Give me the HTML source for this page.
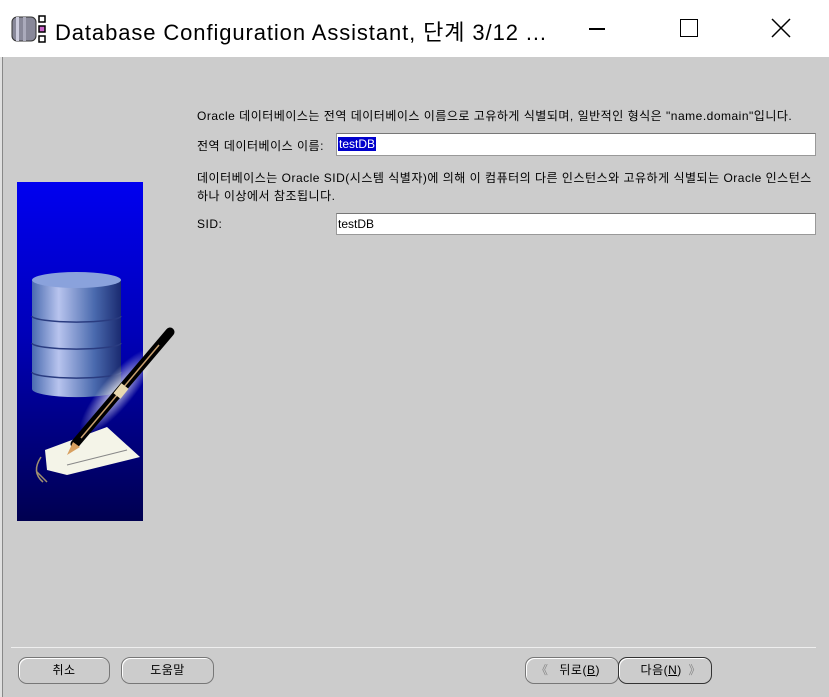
<!DOCTYPE html>
<html><head><meta charset="utf-8"><style>
*{margin:0;padding:0;box-sizing:border-box}
body{width:829px;height:697px;overflow:hidden;background:#cccccc;position:relative;font-family:"Liberation Sans","Noto Sans CJK KR",sans-serif}
.title{position:absolute;left:0;top:0;width:829px;height:57px;background:#fff}
.title .t{position:absolute;left:55px;top:15px;font-size:22px;color:#000;white-space:nowrap;letter-spacing:0.9px}
.lb{position:absolute;left:0;top:57px;width:3px;height:640px;background:#e0e0e0;border-right:1px solid #888}
.tx{position:absolute;font-size:12px;color:#000;white-space:nowrap;letter-spacing:0.5px}
.inp{position:absolute;left:336px;width:480px;background:#fff;border:1px solid #999;border-top-color:#777;font-size:12px;padding-left:1px}
.btn{position:absolute;top:657px;height:27px;border:1px solid #777;border-radius:9px;background:#ccc;font-size:12px;text-align:center;line-height:25px;box-shadow:inset 1px 1px 0 #fff;letter-spacing:0.5px}
</style></head><body>
<div class="title">
<svg style="position:absolute;left:11px;top:15px" width="40" height="28" viewBox="0 0 40 28">
<rect x="1" y="2" width="24" height="24" rx="5" fill="#889" stroke="#333"/>
<rect x="5" y="2" width="3" height="24" fill="#ccd"/><rect x="12" y="2" width="3" height="24" fill="#aab"/>
<rect x="28" y="1" width="6" height="6" fill="#fff" stroke="#000" stroke-width="1.5"/>
<rect x="28" y="11" width="6" height="6" fill="#c6c" stroke="#000" stroke-width="1.5"/>
<rect x="28" y="21" width="6" height="6" fill="#fff" stroke="#000" stroke-width="1.5"/>
</svg>
<div class="t">Database Configuration Assistant, 단계 3/12 ...</div>
<div style="position:absolute;left:589px;top:28px;width:16px;height:1.5px;background:#000"></div>
<div style="position:absolute;left:680px;top:19px;width:18px;height:18px;border:1.5px solid #000"></div>
<svg style="position:absolute;left:771px;top:18px" width="20" height="20"><path d="M1 1L19 19M19 1L1 19" stroke="#000" stroke-width="1.5"/></svg>
</div>
<div class="lb"></div>
<svg style="position:absolute;left:17px;top:182px;overflow:visible" width="126" height="339" viewBox="0 0 126 339">
<defs>
<linearGradient id="bg" x1="0" y1="0" x2="0" y2="1"><stop offset="0" stop-color="#0000f0"/><stop offset="0.45" stop-color="#0000b8"/><stop offset="1" stop-color="#000050"/></linearGradient>
<linearGradient id="cy" x1="0" y1="0" x2="1" y2="0"><stop offset="0" stop-color="#4a6bb0"/><stop offset="0.3" stop-color="#b8c4ee"/><stop offset="0.7" stop-color="#4a6aae"/><stop offset="1" stop-color="#1a2a70"/></linearGradient>
<radialGradient id="gl" cx="0.5" cy="0.5" r="0.5"><stop offset="0" stop-color="#fff" stop-opacity="0.85"/><stop offset="1" stop-color="#fff" stop-opacity="0"/></radialGradient>
</defs>
<rect width="126" height="339" fill="url(#bg)"/>
<path d="M15 98 V207 A44 8 0 0 0 104 207 V98Z" fill="url(#cy)"/>
<ellipse cx="59.5" cy="98" rx="44.5" ry="8" fill="#8aa2dc"/>
<path d="M15 134 A44 6 0 0 0 104 134 M15 161 A44 6 0 0 0 104 161 M15 190 A44 6 0 0 0 104 190" stroke="#2a3c80" stroke-width="1.5" fill="none"/>
<ellipse cx="100" cy="210" rx="55" ry="16" transform="rotate(-50 100 210)" fill="url(#gl)"/>
<path d="M28 268 L90 245 L123 275 L50 293 L30 288Z" fill="#f4f4e8"/>
<path d="M50 283 L110 268" stroke="#888" stroke-width="1"/>
<path d="M24 275 Q14 290 26 300 M20 290 L30 300" stroke="#a09070" fill="none" stroke-width="1.5"/>
<path d="M58 262 L153 150" stroke="#000" stroke-width="9" stroke-linecap="round"/>
<path d="M64 256 L142 163" stroke="#c8a070" stroke-width="1.5"/>
<path d="M100 214 L108 204" stroke="#e8d8b0" stroke-width="9"/>
<path d="M56 260 L50 273 L63 265Z" fill="#d8a060"/>
</svg>
<div class="tx" style="left:197px;top:107px">Oracle 데이터베이스는 전역 데이터베이스 이름으로 고유하게 식별되며, 일반적인 형식은 "name.domain"입니다.</div>
<div class="tx" style="left:197px;top:137px">전역 데이터베이스 이름:</div>
<div class="inp" style="top:133px;height:23px;padding-top:3px"><span style="background:#0000cc;color:#fff;padding:0 1px">testDB</span></div>
<div class="tx" style="left:197px;top:169px">데이터베이스는 Oracle SID(시스템 식별자)에 의해 이 컴퓨터의 다른 인스턴스와 고유하게 식별되는 Oracle 인스턴스</div>
<div class="tx" style="left:197px;top:187px">하나 이상에서 참조됩니다.</div>
<div class="tx" style="left:197px;top:217px">SID:</div>
<div class="inp" style="top:213px;height:22px;padding-top:3px">testDB</div>
<div style="position:absolute;left:11px;top:647px;width:805px;height:1px;background:#999;border-bottom:1px solid #eee"></div>
<div class="btn" style="left:18px;width:92px">취소</div>
<div class="btn" style="left:121px;width:93px">도움말</div>
<div class="btn" style="left:525px;width:94px;color:#000">&nbsp;&nbsp;<span style="color:#888;position:absolute;left:10px">《</span>&nbsp;&nbsp;뒤로(<u>B</u>)</div>
<div class="btn" style="left:618px;width:94px;border-color:#333">다음(<u>N</u>)&nbsp;&nbsp;<span style="color:#888;position:absolute;right:10px">》</span></div>
</body></html>
